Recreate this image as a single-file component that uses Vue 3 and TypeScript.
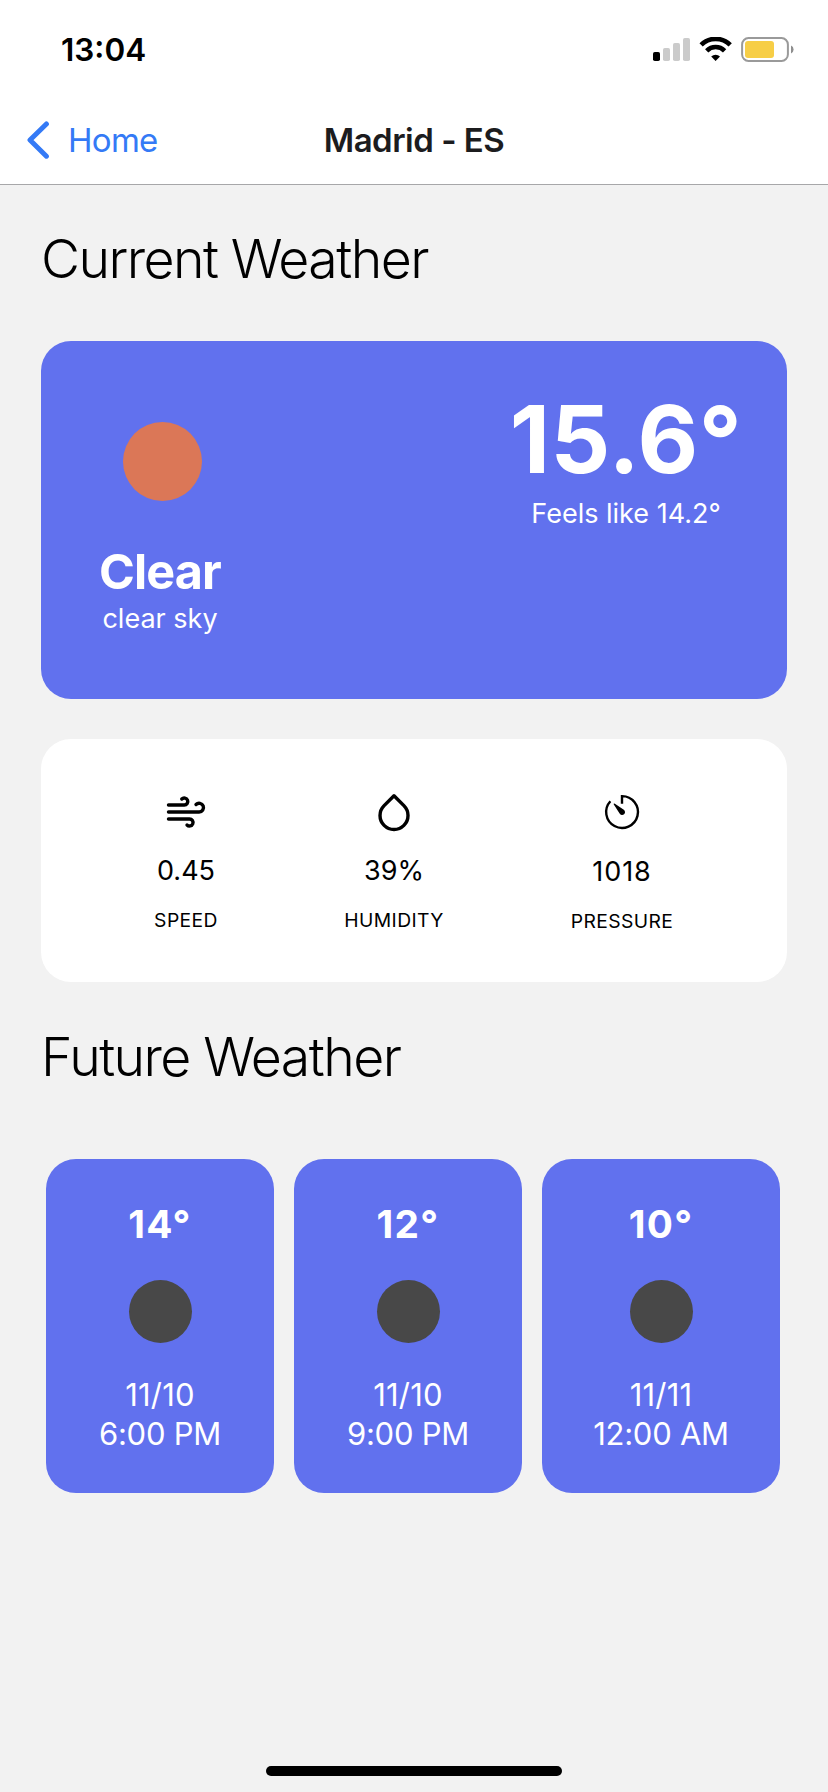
<script setup lang="ts">
interface Forecast {
  temp: string
  date: string
  time: string
}

const forecasts: Forecast[] = [
  { temp: '14°', date: '11/10', time: '6:00 PM' },
  { temp: '12°', date: '11/10', time: '9:00 PM' },
  { temp: '10°', date: '11/11', time: '12:00 AM' },
]
</script>

<template>
  <div class="screen">
    <header class="header">
      <div class="status">
        <span class="clock">13:04</span>
        <svg class="status-icons" width="142" height="26" viewBox="0 0 142 26">
          <rect x="0" y="15" width="7" height="9" rx="1.8" fill="#000" />
          <g fill="#cbcbcb">
            <rect x="10" y="11" width="7" height="13" rx="1.8" />
            <rect x="20" y="6" width="7" height="18" rx="1.8" />
            <rect x="30" y="1" width="7" height="23" rx="1.8" />
          </g>
          <g fill="none" stroke="#000" stroke-width="4.6">
            <path d="M48.1 7.9A20.5 20.5 0 0 1 77.2 7.9" />
            <path d="M53.7 13.8A12.6 12.6 0 0 1 71.6 13.8" />
          </g>
          <path d="M62.6 24L58.2 19.4A6.4 6.4 0 0 1 67 19.4Z" fill="#000" />
          <rect x="89.1" y="1.1" width="45.8" height="22.8" rx="6.4" fill="none" stroke="#9a9a9a" stroke-width="2" />
          <rect x="92" y="4" width="29" height="17" rx="3" fill="#f7ce46" />
          <path d="M138 8.5a4.4 4.4 0 0 1 0 8z" fill="#8e8e8e" />
        </svg>
      </div>
      <nav class="nav">
        <a class="back">
          <svg width="24" height="40" viewBox="0 0 24 40">
            <path d="M19.4 4L3 20L19.4 36.2" fill="none" stroke="#347af6" stroke-width="5" stroke-linecap="round" stroke-linejoin="round" />
          </svg>
          <span class="back-label">Home</span>
        </a>
        <h1 class="title">Madrid - ES</h1>
      </nav>
    </header>

    <main class="content">
      <h2 class="heading">Current Weather</h2>

      <section class="current">
        <div class="condition">
          <div class="sun"></div>
          <div class="condition-name">Clear</div>
          <div class="small-text">clear sky</div>
        </div>
        <div class="reading">
          <div class="reading-temp">15.6°</div>
          <div class="small-text feels">Feels like 14.2°</div>
        </div>
      </section>

      <section class="stats">
        <div class="stat speed">
          <svg width="42" height="42" viewBox="0 0 24 24" fill="none" stroke="#000" stroke-width="1.95" stroke-linecap="round" stroke-linejoin="round">
            <path d="M9.59 4.59A2 2 0 1 1 11 8H2m10.59 11.41A2 2 0 1 0 14 16H2m15.73-8.27A2.5 2.5 0 1 1 19.5 12H2" />
          </svg>
          <div class="stat-value">0.45</div>
          <div class="stat-label">SPEED</div>
        </div>
        <div class="stat humidity">
          <svg width="42" height="42" viewBox="0 0 24 24" fill="none" stroke="#000" stroke-width="1.95" stroke-linecap="round" stroke-linejoin="round">
            <path d="M12 2.69l5.66 5.66a8 8 0 1 1-11.31 0z" />
          </svg>
          <div class="stat-value">39%</div>
          <div class="stat-label">HUMIDITY</div>
        </div>
        <div class="stat pressure">
          <svg width="42" height="42" viewBox="-3 -3 42 42">
            <path d="M18 9.8V2.1A15.9 15.9 0 1 1 6.4 7.2" fill="none" stroke="#000" stroke-width="2.4" />
            <path d="M9.9 9.6Q10.3 9.4 10.9 9.8L19.8 15.8A2.9 2.9 0 1 1 15.6 19.6L9.8 10.6Q9.5 10 9.9 9.6Z" fill="#000" />
          </svg>
          <div class="stat-value">1018</div>
          <div class="stat-label">PRESSURE</div>
        </div>
      </section>

      <h2 class="heading future-heading">Future Weather</h2>

      <section class="forecast">
        <article v-for="item in forecasts" :key="item.time" class="forecast-card">
          <div class="forecast-temp">{{ item.temp }}</div>
          <div class="moon"></div>
          <div class="forecast-when">{{ item.date }}</div>
          <div class="forecast-when forecast-time">{{ item.time }}</div>
        </article>
      </section>
    </main>

    <div class="home-bar"></div>
  </div>
</template>

<style>
body {
  margin: 0;
  background: #f2f2f2;
}
</style>

<style scoped>
.screen {
  box-sizing: border-box;
  width: 828px;
  height: 1792px;
  display: flex;
  flex-direction: column;
  background: #f2f2f2;
  color: #000;
  font-family: Inter, "Liberation Sans", sans-serif;
  overflow: hidden;
}
.header {
  box-sizing: border-box;
  height: 185px;
  flex: none;
  background: #fff;
  border-bottom: 1px solid #a7a7a9;
}
.status {
  display: flex;
  justify-content: space-between;
  height: 96px;
  padding: 0 33px 0 61px;
}
.clock {
  margin-top: 30px;
  line-height: 40px;
  font-size: 31.5px;
  font-weight: 600;
}
.status-icons {
  margin-top: 37px;
}
.nav {
  display: grid;
  grid-template-columns: 1fr auto 1fr;
  align-items: center;
  height: 88px;
}
.back {
  display: flex;
  align-items: center;
  padding-left: 27px;
  gap: 17px;
  color: #347af6;
}
.back-label {
  font-size: 33px;
  line-height: 44px;
  letter-spacing: -0.7px;
}
.title {
  margin: 0;
  font-size: 33px;
  line-height: 44px;
  font-weight: 600;
  letter-spacing: -0.5px;
  color: #1c1c1e;
}
.content {
  flex: 1;
  padding: 0 41px;
}
.heading {
  margin: 0;
  padding-top: 39px;
  height: 117px;
  line-height: 70px;
  font-size: 53.6px;
  font-weight: 300;
  letter-spacing: -1.57px;
  white-space: nowrap;
}
.current {
  box-sizing: border-box;
  display: flex;
  justify-content: space-between;
  height: 358px;
  border-radius: 30px;
  background: #6171ee;
  color: #fff;
  padding: 0 41px 0 54px;
}
.condition {
  width: 130px;
  padding-top: 81.4px;
  display: flex;
  flex-direction: column;
  align-items: center;
}
.sun {
  width: 79px;
  height: 79px;
  margin-left: 4px;
  border-radius: 50%;
  background: #db7757;
}
.condition-name {
  margin-top: 40.6px;
  line-height: 60px;
  font-size: 48.5px;
  font-weight: 700;
  letter-spacing: -0.9px;
}
.small-text {
  line-height: 34px;
  font-size: 27px;
  white-space: nowrap;
}
.reading {
  width: 240px;
  padding-top: 43px;
  display: flex;
  flex-direction: column;
  align-items: center;
}
.reading-temp {
  line-height: 110px;
  font-size: 93.5px;
  font-weight: 700;
  letter-spacing: 0.5px;
}
.feels {
  margin-top: 3px;
}
.stats {
  box-sizing: border-box;
  display: flex;
  justify-content: center;
  gap: 127px;
  height: 243px;
  margin-top: 40px;
  padding-top: 52px;
  border-radius: 30px;
  background: #fff;
}
.stat {
  display: flex;
  flex-direction: column;
  align-items: center;
}
.speed {
  width: 64px;
}
.humidity {
  width: 98px;
}
.pressure {
  width: 104px;
}
.stat-value {
  margin-top: 21px;
  line-height: 34px;
  font-size: 27px;
}
.pressure .stat-value {
  margin-top: 22px;
  letter-spacing: 0.9px;
}
.stat-label {
  margin-top: 18px;
  line-height: 28px;
  font-size: 19.3px;
  letter-spacing: 0.4px;
  white-space: nowrap;
}
.future-heading {
  padding-top: 40px;
  height: 137px;
}
.forecast {
  display: grid;
  grid-template-columns: 228px 228px 238px;
  gap: 20px;
  padding-left: 5px;
}
.forecast-card {
  box-sizing: border-box;
  display: flex;
  flex-direction: column;
  align-items: center;
  height: 334px;
  padding-top: 40px;
  border-radius: 30px;
  background: #6171ee;
  color: #fff;
}
.forecast-temp {
  line-height: 50px;
  font-size: 38.8px;
  font-weight: 700;
  letter-spacing: 1.3px;
}
.moon {
  width: 63px;
  height: 63px;
  margin: 31px 0 32px;
  border-radius: 50%;
  background: #484848;
}
.forecast-when {
  line-height: 39px;
  font-size: 31px;
  letter-spacing: 0.2px;
  white-space: nowrap;
}
.forecast-time {
  letter-spacing: -0.25px;
}
.home-bar {
  width: 296px;
  height: 10px;
  margin: 0 auto 16px;
  border-radius: 5px;
  background: #000;
}
</style>
